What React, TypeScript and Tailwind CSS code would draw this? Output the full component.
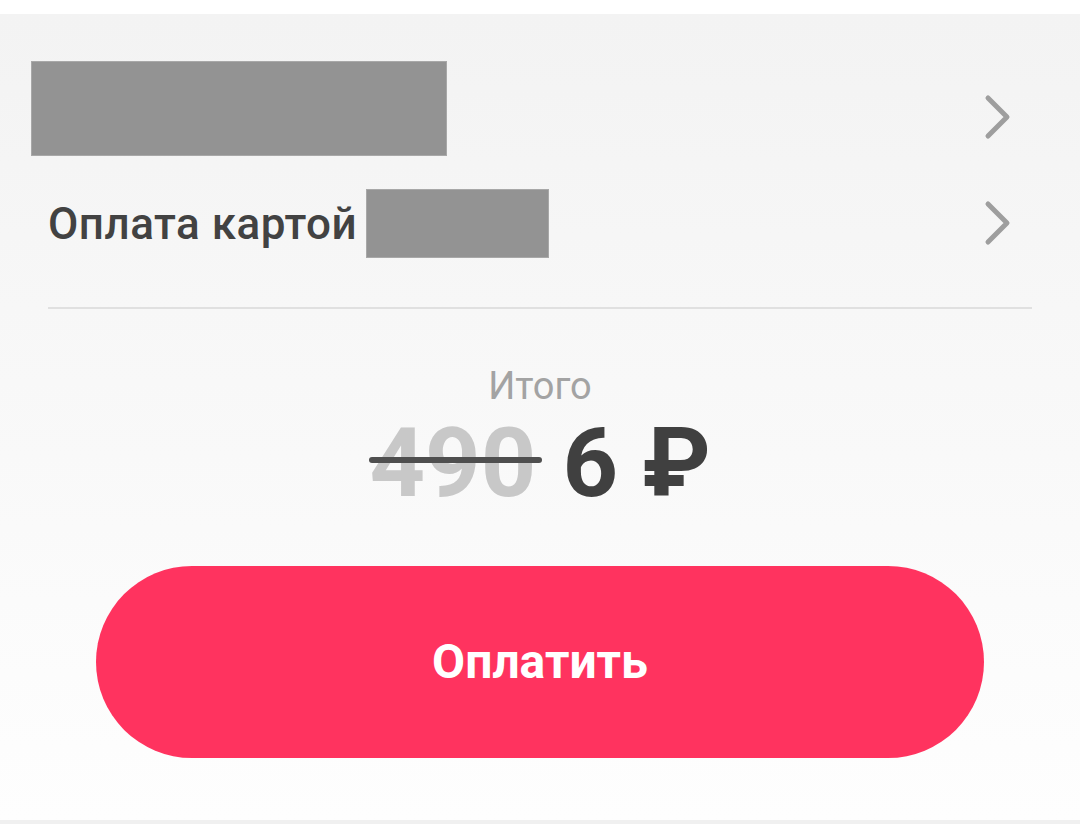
import React from "react";

function Chevron() {
  return (
    <svg width="30" height="46" viewBox="0 0 30 46" fill="none">
      <path
        d="M6 4 L25 23 L6 42"
        stroke="#9e9e9e"
        strokeWidth="5"
        strokeLinecap="round"
        strokeLinejoin="round"
      />
    </svg>
  );
}

export default function App() {
  return (
    <div
      className="w-[1080px] h-[824px] bg-white flex flex-col overflow-hidden"
      style={{ fontFamily: "Roboto, 'Noto Sans', sans-serif" }}
    >
      <div className="h-[14px] shrink-0 bg-white" />
      <div className="flex-1 flex flex-col bg-gradient-to-b from-[#f3f3f3] to-[#fefefe]">
        {/* Строка 1 */}
        <div className="flex items-start justify-between pl-[31px] pr-[68px] pt-[47px]">
          <div className="w-[416px] h-[95px] bg-[#939393] border border-[#a8a8a8]" />
          <div className="mt-[33px]">
            <Chevron />
          </div>
        </div>

        {/* Строка 2 */}
        <div className="flex items-center justify-between pl-[48px] pr-[68px] mt-[33px] h-[69px]">
          <div className="flex items-center">
            <span className="text-[44px] font-medium text-[#424242] leading-none tracking-[0.5px]">
              Оплата картой
            </span>
            <div className="ml-[9px] w-[183px] h-[69px] bg-[#939393] border border-[#a8a8a8]" />
          </div>
          <div className="-mt-[2px]">
            <Chevron />
          </div>
        </div>

        <div className="mx-[48px] w-[984px] mt-[49px] h-[2px] bg-[#e0e0e0]" />

        {/* Итого */}
        <div className="flex flex-col items-center mt-[58px]">
          <div className="text-[38px] leading-none text-[#a3a3a3]">Итого</div>
          <div className="flex items-baseline mt-[10px] leading-none font-bold text-[97px]">
            <span className="relative text-[#c8c8c8]">
              490
              <span className="absolute left-0 right-[-6px] top-[42px] h-[6px] rounded-full bg-[#4f4f4f]" />
            </span>
            <span className="ml-[26px] text-[#404040]">6 ₽</span>
          </div>
        </div>

        <div className="flex justify-center mt-[54px]">
          <button className="w-[888px] h-[192px] rounded-full bg-[#ff335f] text-white text-[48px] font-bold leading-none">
            Оплатить
          </button>
        </div>
        <div className="flex-1" />
      </div>
      <div className="h-[4px] shrink-0 bg-[#f0f0f0]" />
    </div>
  );
}
